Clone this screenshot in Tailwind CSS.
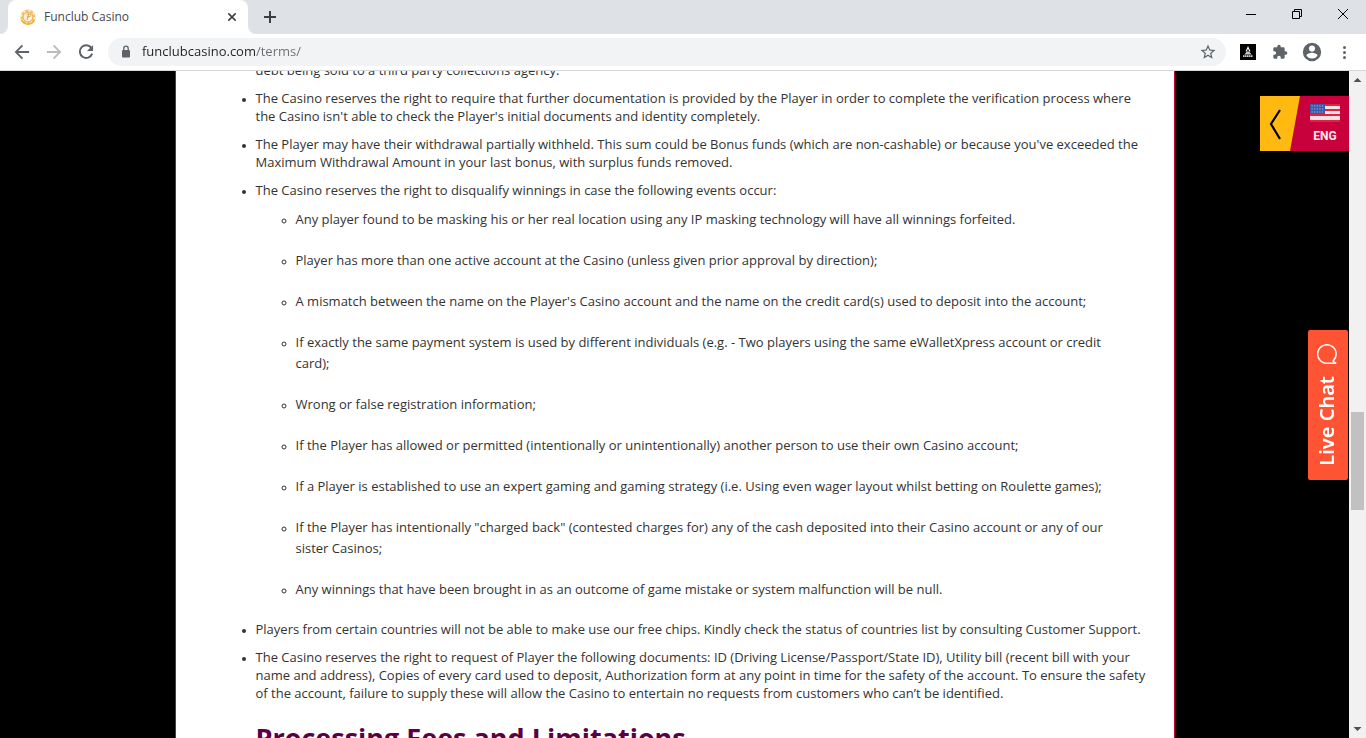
<!DOCTYPE html>
<html lang="en">
<head>
    <meta charset="UTF-8">
    <meta name="viewport" content="width=device-width, initial-scale=1.0">
    <title>Funclub Casino</title>
    <script src="https://cdn.jsdelivr.net/npm/@tailwindcss/browser@4"></script>
</head>
<body class="h-screen flex flex-col overflow-hidden bg-black font-['Open_Sans',sans-serif]">

    <!-- Tab strip -->
    <header class="shrink-0">
        <div class="h-[34px] bg-[#dee1e6] flex items-stretch">
            <div class="relative w-60 ml-2 bg-white rounded-t-lg flex items-center pl-3 pr-2">
                <svg class="absolute -left-2 bottom-0 w-2 h-2" viewBox="0 0 8 8" fill="#fff"><path d="M8 0v8H0a8 8 0 0 0 8-8z"/></svg>
                <svg class="absolute -right-2 bottom-0 w-2 h-2" viewBox="0 0 8 8" fill="#fff"><path d="M0 0v8h8a8 8 0 0 1-8-8z"/></svg>
                <svg class="w-4 h-4" viewBox="0 0 16 16" fill="none">
                    <circle cx="8" cy="8" r="7.6" fill="#f6c25c"/>
                    <circle cx="8" cy="8" r="6.6" stroke="#fdeccb" stroke-width="2" stroke-dasharray="2.4 2.8"/>
                    <path d="M1.5 11a7.2 7.2 0 0 0 13 0" stroke="#f0b030" stroke-width="1.6"/>
                    <circle cx="8" cy="8" r="4.8" fill="#fff1d6" stroke="#e8a766" stroke-width=".8"/>
                    <path d="M7 11l1.6-6H10c1.6 0 1.2 2.8-.8 2.8H7M6.4 5H9" stroke="#d9a35c" stroke-width="1"/>
                </svg>
                <span class="ml-2 flex-1 text-xs text-[#45484c]">Funclub Casino</span>
                <button aria-label="Close tab" class="w-4 h-4 flex items-center justify-center">
                    <svg class="w-2 h-2" viewBox="0 0 8 8" stroke="#3c4043" stroke-width="1.6"><path d="M.3.3l7.4 7.4M7.7.3L.3 7.7"/></svg>
                </button>
            </div>
            <button aria-label="New tab" class="ml-2 w-7 flex items-center justify-center">
                <svg class="w-3 h-3" viewBox="0 0 12 12" stroke="#3c4043" stroke-width="2"><path d="M6 0v12M0 6h12"/></svg>
            </button>
            <div class="ml-auto flex h-7">
                <button aria-label="Minimize" class="w-[46px] flex items-center justify-center">
                    <svg class="w-[10px] h-[10px]" viewBox="0 0 10 10" stroke="#000"><path d="M0 5.5h10"/></svg>
                </button>
                <button aria-label="Restore" class="w-[46px] flex items-center justify-center">
                    <svg class="w-[10px] h-[10px]" viewBox="0 0 10 10" stroke="#000" fill="none"><path d="M.5 2.5h7v7h-7zM2.5 2.5v-2h7v7h-2"/></svg>
                </button>
                <button aria-label="Close" class="w-[46px] flex items-center justify-center">
                    <svg class="w-[10px] h-[10px]" viewBox="0 0 10 10" stroke="#000"><path d="M0 0l10 10M10 0L0 10"/></svg>
                </button>
            </div>
        </div>

        <!-- Toolbar -->
        <div class="h-[37px] bg-white border-b border-[#d5d7da] flex items-center pl-3 pr-[14px]">
            <div class="flex items-center gap-3">
                <button aria-label="Back">
                    <svg class="w-5 h-5" viewBox="0 0 24 24" fill="#5f6368"><path d="M20.5 10.8H7.4l5.9-5.9-1.6-1.6L3.2 12l8.5 8.7 1.6-1.6-5.9-5.9h13.1z"/></svg>
                </button>
                <button aria-label="Forward">
                    <svg class="w-5 h-5" viewBox="0 0 24 24" fill="#babcbe"><path d="M3.5 10.8h13.1l-5.9-5.9 1.6-1.6 8.5 8.7-8.5 8.7-1.6-1.6 5.9-5.9H3.5z"/></svg>
                </button>
                <button aria-label="Reload">
                    <svg class="w-5 h-5" viewBox="0 0 24 24" fill="none" stroke="#5f6368" stroke-width="2.4"><path d="M18.6 7.4A7.6 7.6 0 1 0 19.4 14"/><path d="M20.5 3.5v7.3h-7.3z" fill="#5f6368" stroke="none"/></svg>
                </button>
            </div>
            <div class="ml-3 flex-1 h-7 rounded-full bg-[#f1f3f4] flex items-center pl-3 pr-[9px]">
                <svg class="w-3 h-4" viewBox="0 0 12 16" fill="none"><rect x="2" y="6" width="8" height="7.5" rx="1" fill="#5f6368"/><path d="M3.8 6.5V4.4a2.2 2.2 0 0 1 4.4 0v2.1" stroke="#5f6368" stroke-width="1.3"/></svg>
                <input type="text" aria-label="Address" value="funclubcasino.com/terms/" class="ml-[10px] flex-1 text-[13px] outline-none text-transparent bg-clip-text bg-[linear-gradient(to_right,#202124_114px,#6b6f74_114px)]">
                <button aria-label="Bookmark this page">
                    <svg class="w-[18px] h-[18px]" viewBox="0 0 24 24" fill="#5f6368"><path d="M22 9.24l-7.19-.62L12 2 9.19 8.63 2 9.24l5.46 4.73L5.82 21 12 17.27 18.18 21l-1.63-7.03L22 9.24zM12 15.4l-3.76 2.27 1-4.28-3.32-2.88 4.38-.38L12 6.1l1.71 4.04 4.38.38-3.32 2.88 1 4.28L12 15.4z"/></svg>
                </button>
            </div>
            <div class="ml-[14px] flex items-center">
                <button aria-label="Extension">
                    <svg class="w-4 h-4" viewBox="0 0 16 16"><path fill="#000" d="M0 0h16v16H0z"/><path d="M8 2L5.5 7.5h1.3L8 4.8l1.2 2.7h1.3z" fill="#fff"/><path d="M7 7.6h2l2.8 2.8H4.2z" fill="#ccc"/><path d="M3 12.2h10" stroke="#ccc" stroke-width="1.8" stroke-dasharray="1.5 .4"/></svg>
                </button>
                <button aria-label="Extensions" class="ml-4">
                    <svg class="w-4 h-4" viewBox="0 0 24 24" fill="#5f6368"><path d="M20.5 11H19V7c0-1.1-.9-2-2-2h-4V3.500a2.500 2.500 0 0 0-5 0V5H4c-1.100 0-2 .9-2 2v3.800h1.500a2.700 2.700 0 0 1 0 5.400H2V20c0 1.100.9 2 2 2h3.800v-1.500a2.700 2.700 0 0 1 5.400 0V22H17c1.100 0 2-.9 2-2v-4h1.500a2.500 2.500 0 0 0 0-5z"/></svg>
                </button>
                <button aria-label="Profile" class="ml-[13px]">
                    <svg class="w-[22px] h-[22px]" viewBox="0 0 24 24" fill="#5f6368"><path d="M12 2a10 10 0 1 0 0 20 10 10 0 0 0 0-20zm0 3a3.300 3.300 0 1 1 0 6.600A3.300 3.300 0 0 1 12 5zm0 14.200A7.200 7.200 0 0 1 6 16c0-2 4-3.100 6-3.100s6 1.100 6 3.100a7.200 7.200 0 0 1-6 3.200z"/></svg>
                </button>
                <button aria-label="Menu" class="ml-[13px]">
                    <svg class="w-4 h-4" viewBox="0 0 16 16" fill="#5f6368"><circle cx="8.500" cy="3.500" r="1.500"/><circle cx="8.500" cy="8.500" r="1.500"/><circle cx="8.500" cy="13.500" r="1.500"/></svg>
                </button>
            </div>
        </div>
    </header>

    <div class="relative flex-1 min-h-0 flex">
        <!-- Terms text -->
        <main class="flex-1 overflow-hidden">
            <div class="max-w-[1000px] min-h-full mx-auto bg-white border-x border-[#c8003c] pl-20 pr-10 whitespace-nowrap text-[13px] text-[#333]">
                <ul class="-mt-[10px] list-disc leading-[18px] marker:text-[10px]">
                    <li class="mb-[10px] list-none">debt being sold to a third party collections agency.</li>
                    <li class="mb-[10px]">The Casino reserves the right to require that further documentation is provided by the Player in order to complete the verification process where<br>the Casino isn't able to check the Player's initial documents and identity completely.</li>
                    <li class="mb-[10px]">The Player may have their withdrawal partially withheld. This sum could be Bonus funds (which are non-cashable) or because you've exceeded the<br>Maximum Withdrawal Amount in your last bonus, with surplus funds removed.</li>
                    <li>The Casino reserves the right to disqualify winnings in case the following events occur:
                        <ul class="mt-[10px] pl-10 list-[circle] leading-[21px]">
                            <li class="mb-5">Any player found to be masking his or her real location using any IP masking technology will have all winnings forfeited.</li>
                            <li class="mb-5">Player has more than one active account at the Casino (unless given prior approval by direction);</li>
                            <li class="mb-5">A mismatch between the name on the Player's Casino account and the name on the credit card(s) used to deposit into the account;</li>
                            <li class="mb-5">If exactly the same payment system is used by different individuals (e.g. - Two players using the same eWalletXpress account or credit<br>card);</li>
                            <li class="mb-5">Wrong or false registration information;</li>
                            <li class="mb-5">If the Player has allowed or permitted (intentionally or unintentionally) another person to use their own Casino account;</li>
                            <li class="mb-5">If a Player is established to use an expert gaming and gaming strategy (i.e. Using even wager layout whilst betting on Roulette games);</li>
                            <li class="mb-5">If the Player has intentionally "charged back" (contested charges for) any of the cash deposited into their Casino account or any of our<br>sister Casinos;</li>
                            <li class="mb-5">Any winnings that have been brought in as an outcome of game mistake or system malfunction will be null.</li>
                        </ul>
                    </li>
                    <li class="mb-[10px]">Players from certain countries will not be able to make use our free chips. Kindly check the status of countries list by consulting Customer Support.</li>
                    <li>The Casino reserves the right to request of Player the following documents: ID (Driving License/Passport/State ID), Utility bill (recent bill with your<br>name and address), Copies of every card used to deposit, Authorization form at any point in time for the safety of the account. To ensure the safety<br>of the account, failure to supply these will allow the Casino to entertain no requests from customers who can’t be identified.</li>
                </ul>
                <h2 class="mt-5 text-[27px] leading-8 font-bold text-[#5c0046]">Processing Fees and Limitations</h2>
            </div>
        </main>

        <!-- Scrollbar -->
        <div class="w-[17px] bg-[#f1f1f1] flex flex-col items-center">
            <svg class="w-[17px] h-[17px]" viewBox="0 0 17 17" fill="#505050"><path d="M4.500 11l4-4 4 4z"/></svg>
            <div class="w-[13px] h-[98px] mt-[324px] bg-[#c1c1c1]"></div>
            <svg class="w-[17px] h-[17px] mt-auto" viewBox="0 0 17 17" fill="#505050"><path d="M4.500 6l4 4 4-4z"/></svg>
        </div>

        <!-- Language switch -->
        <button class="absolute top-[25px] right-[17px] w-[89px] h-[55px] bg-[#c8003c]">
            <svg class="absolute inset-0 w-10 h-[55px]" viewBox="0 0 40 55" fill="none"><path d="M0 0h40L30 55H0z" fill="#ffb910"/><path d="M20 14l-9 14 9 15" stroke="#000" stroke-width="2.200"/></svg>
            <span class="absolute left-[50px] top-2 w-[30px] flex flex-col items-center">
                <svg class="w-[30px] h-[18px]" viewBox="0 0 30 18"><path fill="#f3dfe6" d="M0 0h30v18H0z"/><path d="M0 1h30M0 6h30M0 11h30M0 17h30" stroke="#e0233f" stroke-width="2"/><path fill="#3d58a8" d="M0 0h15v10H0z"/><path d="M1.500 2h13M1.500 5h13M1.500 8h13" stroke="#a9b8e2" stroke-width="1.200" stroke-dasharray="1.200 1.400"/></svg>
                <span class="mt-2 font-['Roboto'] font-bold text-xs leading-3 text-[#ffe9ee]">ENG</span>
            </span>
        </button>

        <!-- Live chat -->
        <button class="absolute top-[259px] right-[18px] w-10 h-[150px] rounded-xs bg-[#ff5434] text-white flex flex-col items-center gap-3 pt-[14px] pr-[2px]">
            <svg class="w-5 h-5 shrink-0" viewBox="0 0 20 20" fill="none" stroke="#fff" stroke-width="1.400"><path d="M16 16.900A9.200 9.200 0 1 0 10 19.200h9.200c-1.500-.5-2.300-1.200-3.200-2.300z"/></svg>
            <span class="[writing-mode:vertical-rl] rotate-180 font-['Noto_Sans'] font-semibold text-xl leading-6">Live Chat</span>
        </button>
    </div>
</body>
</html>
